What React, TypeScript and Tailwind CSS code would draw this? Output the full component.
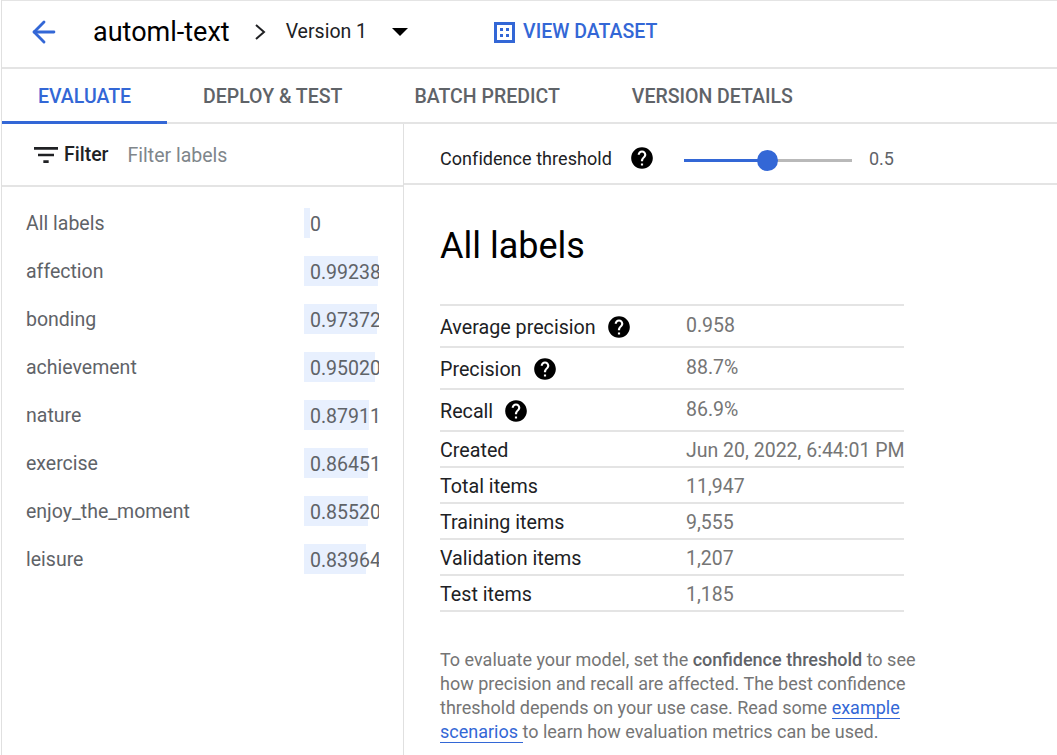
import React from 'react'
import { ArrowLeft } from 'lucide-react'

const labels = [
  { name: 'All labels', value: '0', width: 6 },
  { name: 'affection', value: '0.99238', width: 74 },
  { name: 'bonding', value: '0.97372', width: 73 },
  { name: 'achievement', value: '0.95020', width: 71 },
  { name: 'nature', value: '0.87911', width: 65 },
  { name: 'exercise', value: '0.86451', width: 64 },
  { name: 'enjoy_the_moment', value: '0.85520', width: 64 },
  { name: 'leisure', value: '0.83964', width: 62 },
]

const metrics = [
  { name: 'Average precision', value: '0.958', help: true },
  { name: 'Precision', value: '88.7%', help: true },
  { name: 'Recall', value: '86.9%', help: true },
  { name: 'Created', value: 'Jun 20, 2022, 6:44:01 PM' },
  { name: 'Total items', value: '11,947' },
  { name: 'Training items', value: '9,555' },
  { name: 'Validation items', value: '1,207' },
  { name: 'Test items', value: '1,185' },
]

const tabs = ['DEPLOY & TEST', 'BATCH PREDICT', 'VERSION DETAILS']

function HelpIcon({ className }: { className?: string }) {
  return (
    <svg viewBox="0 0 24 24" className={className} fill="currentColor">
      <path d="M12 2C6.48 2 2 6.48 2 12s4.48 10 10 10 10-4.48 10-10S17.52 2 12 2zm1 17h-2v-2h2v2zm2.07-7.75l-.9.92C13.45 12.9 13 13.5 13 15h-2v-.5c0-1.1.45-2.1 1.17-2.83l1.24-1.26c.37-.36.59-.86.59-1.41 0-1.1-.9-2-2-2s-2 .9-2 2H8c0-2.21 1.79-4 4-4s4 1.79 4 4c0 .88-.36 1.68-.93 2.25z" />
    </svg>
  )
}

export default function App() {
  return (
    <div className="h-[755px] w-[1057px] overflow-hidden bg-white font-['Roboto',sans-serif]">
      <div className="ml-px h-full border-l border-[#e0e0e0]">
        <header className="flex h-[69px] items-center border-b-2 border-t border-[#e4e4e4] pb-1">
          <ArrowLeft className="ml-[25px] h-[34px] w-[34px] text-[#3367d6]" strokeWidth={2} />
          <h1 className="ml-[32px] text-[27px] text-[#000]">automl-text</h1>
          <svg viewBox="0 0 12 18" className="ml-[24px] h-[18px] w-3 text-[#202124]" fill="none" stroke="currentColor" strokeWidth="2">
            <path d="M2 2l8 7-8 7" />
          </svg>
          <span className="ml-[20px] text-[19.5px] text-[#202124]">Version 1</span>
          <span className="ml-[25px] h-0 w-0 border-x-[8px] border-t-[8px] border-x-transparent border-t-[#000]" />
          <svg viewBox="0 0 21 21" className="ml-[86px] h-[21px] w-[21px] text-[#3367d6]" fill="currentColor" fillRule="evenodd">
            <path d="M0 0h21v21H0V0zm3 3v15h15V3H3zm3 3h3v3H6V6zm6 0h3v3h-3V6zm-6 6h3v3H6v-3zm6 0h3v3h-3v-3z" />
          </svg>
          <span className="ml-[8px] text-[19.5px] font-medium text-[#3367d6]">VIEW DATASET</span>
        </header>

        <nav className="flex h-[55px] border-b-2 border-[#e4e4e4] text-[19.5px] font-medium text-[#5f6368]">
          <div className="-mb-0.5 flex w-[165px] items-center justify-center border-b-[3px] border-[#3367d6] pt-1 text-[#3367d6]">EVALUATE</div>
          {tabs.map(t => (
            <div key={t} className="flex items-center px-9 pt-0.5">{t}</div>
          ))}
        </nav>

        <div className="flex">
          <aside className="h-[632px] w-[402px] shrink-0 border-r border-[#e0e0e0]">
            <div className="flex h-[63px] items-center border-b-2 border-[#e4e4e4]">
              <svg viewBox="0 0 24 24" className="ml-[28px] h-8 w-8 text-[#202124]" fill="currentColor">
                <path d="M10 18h4v-2h-4v2zM3 6v2h18V6H3zm3 7h12v-2H6v2z" />
              </svg>
              <span className="ml-[2px] text-[19.5px] font-medium text-[#202124]">Filter</span>
              <span className="ml-[19px] mt-0.5 text-[19.5px] text-[#80868b]">Filter labels</span>
            </div>
            <ul className="pt-[12px]">
              {labels.map(l => (
                <li key={l.name} className="flex h-12 items-center text-[19.5px] text-[#5f6368]">
                  <span className="ml-[24px] mt-0.5 w-[278px]">{l.name}</span>
                  <div className="relative h-[30px] w-[76px]">
                    <div className="absolute inset-y-0 left-0 bg-[#e8f0fe]" style={{ width: l.width }} />
                    <span className="absolute left-[6px] top-[2px] w-[69px] overflow-hidden whitespace-nowrap">{l.value}</span>
                  </div>
                </li>
              ))}
            </ul>
          </aside>

          <main className="min-w-0 flex-1">
            <div className="flex h-[61px] items-center border-b-2 border-[#e4e4e4] pt-[11px]">
              <span className="ml-[36px] text-lg tracking-[0.05px] text-[#202124]">Confidence threshold</span>
              <HelpIcon className="ml-[17px] -mt-0.5 h-[26px] w-[26px] text-black" />
              <div className="relative ml-[29px] mt-0.5 h-[3px] w-[168px] bg-[#b9b9b9]">
                <div className="h-full w-[84px] bg-[#3367d6]" />
                <div className="absolute -top-[9px] left-[73px] h-[21px] w-[21px] rounded-full bg-[#3367d6]" />
              </div>
              <span className="ml-[17px] text-lg text-[#5f6368]">0.5</span>
            </div>

            <div className="pl-[36px]">
              <h2 className="pt-[38px] text-[36px] leading-[46px] text-[#000]">All labels</h2>
              <dl className="mt-[35px] w-[464px] border-t-2 border-[#e4e4e4]">
                {metrics.map(m => (
                  <div key={m.name} className={`flex items-center border-b-2 border-[#e4e4e4] pt-1 ${m.help ? 'h-[42px]' : 'h-9'}`}>
                    <dt className="flex w-[246px] shrink-0 items-center text-[19.7px] text-[#202124]">
                      {m.name}
                      {m.help && <HelpIcon className="ml-[10px] -mt-0.5 h-[26px] w-[26px] text-black" />}
                    </dt>
                    <dd className={`whitespace-nowrap text-[19.5px] text-[#757575] ${m.help ? '-mt-1' : ''}`}>{m.value}</dd>
                  </div>
                ))}
              </dl>
              <p className="mt-[36px] w-[490px] text-lg leading-6 text-[#757575]">
                To evaluate your model, set the <b className="font-medium text-[#5f6368]">confidence threshold</b> to see how precision and recall are affected. The best confidence threshold depends on your use case. Read some{' '}
                <a className="border-b border-[#3367d6] text-[#3367d6]">example scenarios </a>
                to learn how evaluation metrics can be used.
              </p>
            </div>
          </main>
        </div>
      </div>
    </div>
  )
}
